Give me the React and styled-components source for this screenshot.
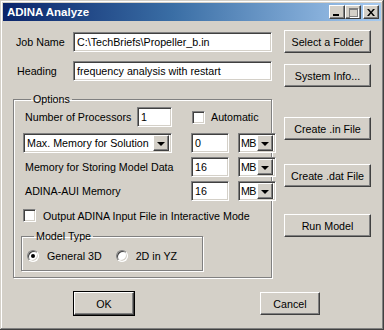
import React from 'react';
import styled, { createGlobalStyle, css } from 'styled-components';

const GlobalStyle = createGlobalStyle`
  html, body {
    margin: 0;
    padding: 0;
    background: #d4d0c8;
  }
  * {
    box-sizing: border-box;
  }
`;

const face = '#d4d0c8';

const raised = css`
  border: 1px solid;
  border-color: #fff #404040 #404040 #fff;
  box-shadow: inset -1px -1px #808080, inset 1px 1px ${face};
  background: ${face};
`;

const sunken = css`
  border: 1px solid;
  border-color: #808080 #fff #fff #808080;
  box-shadow: inset 1px 1px #404040, inset -1px -1px ${face};
`;

const Window = styled.div`
  width: 384px;
  height: 330px;
  padding: 3px;
  background: ${face};
  box-shadow: inset -1px -1px #404040, inset 1px 1px ${face},
    inset -2px -2px #808080, inset 2px 2px #fff;
  font-family: "Liberation Sans", Arial, sans-serif;
  font-size: 10.7px;
  color: #000;
  display: flex;
  flex-direction: column;
`;

const TitleBar = styled.div`
  height: 18px;
  display: flex;
  align-items: center;
  padding: 0 2px 0 2px;
  background: linear-gradient(90deg, #0a246a 0%, #3a6ea5 45%, #a6caf0 100%);
`;

const Title = styled.span`
  flex: 1;
  color: #fff;
  font-weight: bold;
  font-size: 11.5px;
  padding-left: 2px;
`;

const CapButton = styled.div`
  ${raised};
  width: 16px;
  height: 14px;
  display: flex;
  align-items: center;
  justify-content: center;
  margin-left: ${p => p.$gap || 0}px;
`;

const MinGlyph = styled.div`
  width: 6px;
  height: 2px;
  background: #000;
  margin: 6px 3px 0 0;
`;

const MaxGlyph = styled.div`
  width: 9px;
  height: 9px;
  border: 1px solid #808080;
  border-top-width: 2px;
  box-shadow: 1px 1px #fff;
`;

const Body = styled.div`
  flex: 1;
  padding: 11px 0 0 10px;
  display: flex;
  flex-direction: column;
`;

const Main = styled.div`
  display: flex;
`;

const LeftCol = styled.div`
  width: 259px;
  display: flex;
  flex-direction: column;
`;

const RightCol = styled.div`
  width: 87px;
  margin-left: 12px;
  margin-top: -2px;
  display: flex;
  flex-direction: column;
`;

const FieldRow = styled.div`
  display: flex;
  align-items: center;
  height: 20px;
  margin-top: ${p => p.$top || 0}px;
`;

const Label = styled.span`
  width: ${p => p.$w}px;
  padding-left: ${p => p.$pad || 0}px;
  white-space: nowrap;
`;

const TextBox = styled.div`
  ${sunken};
  background: #fff;
  width: ${p => p.$w}px;
  height: ${p => p.$h || 20}px;
  padding: 0 3px;
  display: flex;
  align-items: center;
  white-space: nowrap;
  overflow: hidden;
`;

const Group = styled.fieldset`
  margin: ${p => p.$top || 0}px 0 0 ${p => p.$left || 0}px;
  width: ${p => p.$w}px;
  padding: ${p => p.$pad};
  border: 1px solid #808080;
  box-shadow: inset 1px 1px #fff, 1px 1px #fff;
  min-width: 0;
`;

const Legend = styled.legend`
  padding: 0 2px;
  margin-left: ${p => p.$left || 8}px;
  line-height: 13px;
`;

const ProcRow = styled.div`
  display: flex;
  align-items: center;
  height: 20px;
`;

const MemGrid = styled.div`
  display: grid;
  grid-template-columns: 159px 38px 38px;
  grid-auto-rows: 20px;
  column-gap: 9px;
  row-gap: 4px;
  margin-top: 6px;
  align-items: center;
`;

const Combo = styled.div`
  ${sunken};
  background: #fff;
  width: ${p => p.$w}px;
  height: 20px;
  display: flex;
  align-items: center;
  padding: 2px 2px 2px ${p => (p.$small ? 2 : 3)}px;
`;

const ComboText = styled.span`
  flex: 1;
  min-width: 0;
  overflow: hidden;
  white-space: nowrap;
  letter-spacing: ${p => (p.$small ? '-0.6px' : '0')};
`;

const DropButton = styled.div`
  ${raised};
  flex: none;
  width: 16px;
  height: 16px;
  display: flex;
  align-items: center;
  justify-content: center;
`;

const Arrow = styled.div`
  width: 0;
  height: 0;
  border-left: 4px solid transparent;
  border-right: 4px solid transparent;
  border-top: 4px solid #000;
  margin-top: 1px;
`;

const CheckRow = styled.label`
  display: flex;
  align-items: center;
  margin-top: ${p => p.$top || 0}px;
  margin-left: ${p => p.$left || 0}px;
`;

const CheckBox = styled.span`
  ${sunken};
  background: #fff;
  width: 13px;
  height: 13px;
  margin-right: ${p => p.$gap || 7}px;
`;

const RadioRow = styled.div`
  display: flex;
  align-items: center;
  height: 14px;
  margin-top: 6px;
`;

const Radio = styled.span`
  width: 12px;
  height: 12px;
  border-radius: 50%;
  border: 1px solid;
  border-color: #808080 #fff #fff #808080;
  background: #fff;
  box-shadow: inset 1px 1px #404040, inset -1px -1px ${face};
  display: flex;
  align-items: center;
  justify-content: center;
  margin-left: ${p => p.$left || 0}px;
  margin-right: 8px;
`;

const Dot = styled.span`
  width: 4px;
  height: 4px;
  border-radius: 50%;
  background: #000;
`;

const Button = styled.div`
  ${raised};
  width: ${p => p.$w || 87}px;
  height: 23px;
  margin-top: ${p => p.$top || 0}px;
  margin-left: ${p => p.$left || 0}px;
  display: flex;
  align-items: center;
  justify-content: center;
  white-space: nowrap;
  ${p => p.$default && css`
    outline: 1px solid #000;
    outline-offset: 0;
  `}
`;

const Footer = styled.div`
  display: flex;
  align-items: center;
  padding-left: 61px;
  margin-top: 14px;
`;

function Check({ children, top, left, gap }) {
  return (
    <CheckRow $top={top} $left={left}>
      <CheckBox $gap={gap} />
      <span>{children}</span>
    </CheckRow>
  );
}

function Dropdown({ w, text }) {
  const small = w < 60;
  return (
    <Combo $w={w} $small={small}>
      <ComboText $small={small}>{text}</ComboText>
      <DropButton><Arrow /></DropButton>
    </Combo>
  );
}

export default function App() {
  return (
    <>
      <GlobalStyle />
      <Window>
        <TitleBar>
          <Title>ADINA Analyze</Title>
          <CapButton><MinGlyph /></CapButton>
          <CapButton><MaxGlyph /></CapButton>
          <CapButton $gap={2}>
            <svg width="8" height="7" viewBox="0 0 8 7">
              <path d="M0 0h2l2 2.5L6 0h2L5 3.5 8 7H6L4 4.5 2 7H0l3-3.5z" fill="#000" />
            </svg>
          </CapButton>
        </TitleBar>
        <Body>
          <Main>
            <LeftCol>
              <FieldRow>
                <Label $w={60} $pad={3}>Job Name</Label>
                <TextBox $w={199}>C:\TechBriefs\Propeller_b.in</TextBox>
              </FieldRow>
              <FieldRow $top={9}>
                <Label $w={60} $pad={4}>Heading</Label>
                <TextBox $w={199}>frequency analysis with restart</TextBox>
              </FieldRow>
              <Group $top={12} $w={259} $pad="1px 6px 6px 9px">
                <Legend>Options</Legend>
                <ProcRow>
                  <Label $w={114} $pad={2}>Number of Processors</Label>
                  <TextBox $w={35}>1</TextBox>
                  <Check left={20} gap={6}>Automatic</Check>
                </ProcRow>
                <MemGrid>
                  <Dropdown w={149} text="Max. Memory for Solution" />
                  <TextBox $w={38}>0</TextBox>
                  <Dropdown w={38} text="MB" />
                  <Label $pad={2}>Memory for Storing Model Data</Label>
                  <TextBox $w={38}>16</TextBox>
                  <Dropdown w={38} text="MB" />
                  <Label $pad={2}>ADINA-AUI Memory</Label>
                  <TextBox $w={38}>16</TextBox>
                  <Dropdown w={38} text="MB" />
                </MemGrid>
                <Check top={8}>Output ADINA Input File in Interactive Mode</Check>
                <Group $top={8} $left={-2} $w={182} $pad="0 6px 7px 5px">
                  <Legend $left={7}>Model Type</Legend>
                  <RadioRow>
                    <Radio><Dot /></Radio>
                    <span>General 3D</span>
                    <Radio $left={14} />
                    <span>2D in YZ</span>
                  </RadioRow>
                </Group>
              </Group>
            </LeftCol>
            <RightCol>
              <Button>Select a Folder</Button>
              <Button $top={11}>System Info...</Button>
              <Button $top={30}>Create .in File</Button>
              <Button $top={24}>Create .dat File</Button>
              <Button $top={27}>Run Model</Button>
            </RightCol>
          </Main>
          <Footer>
            <Button $w={60} $default>OK</Button>
            <Button $w={60} $left={126}>Cancel</Button>
          </Footer>
        </Body>
      </Window>
    </>
  );
}
